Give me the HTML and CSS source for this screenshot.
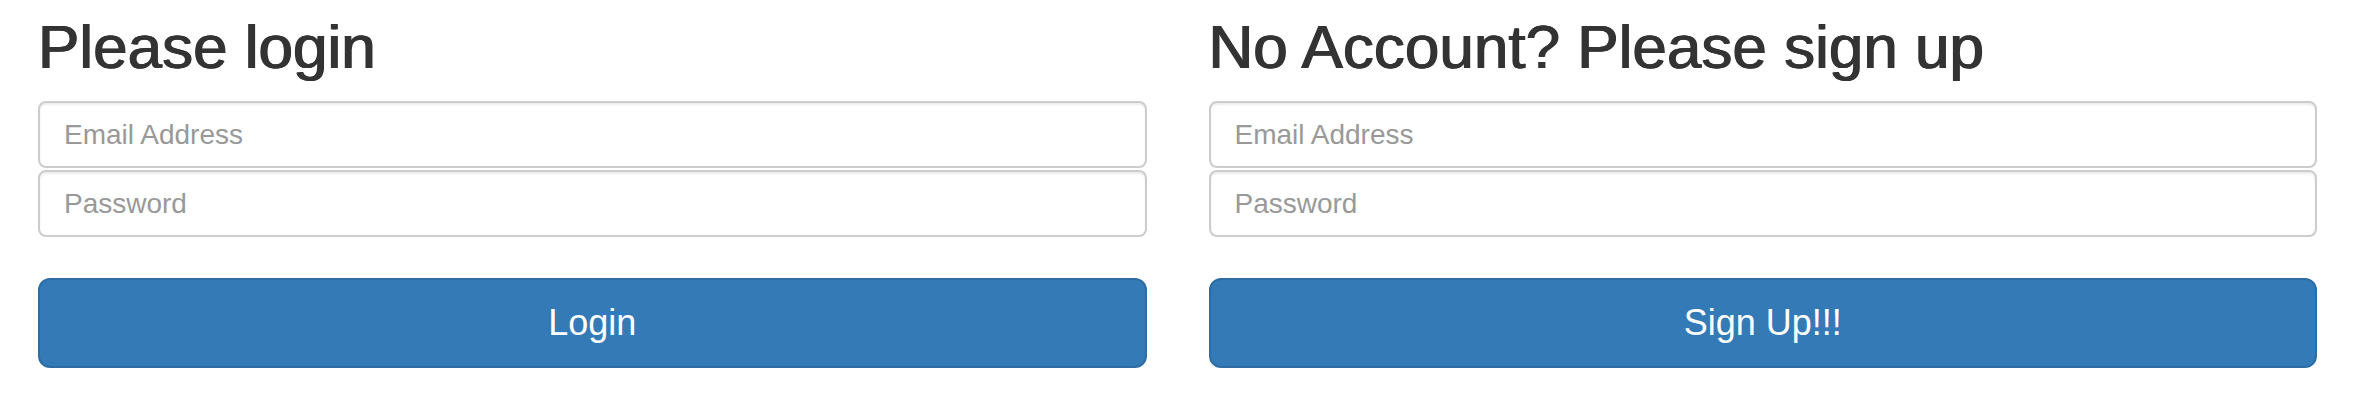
FILE: index.html
```html
<!DOCTYPE html>
<html>
<head>
<meta charset="utf-8">
<link rel="stylesheet" href="styles.css">
</head>
<body>
<div class="page">
  <section class="col">
    <h2 class="title">Please login</h2>
    <form class="form">
      <div class="fields">
        <input class="field" type="email" placeholder="Email Address">
        <input class="field" type="password" placeholder="Password">
      </div>
      <button class="btn" type="button">Login</button>
    </form>
  </section>
  <section class="col">
    <h2 class="title">No Account? Please sign up</h2>
    <form class="form">
      <div class="fields">
        <input class="field" type="email" placeholder="Email Address">
        <input class="field" type="password" placeholder="Password">
      </div>
      <button class="btn" type="button">Sign Up!!!</button>
    </form>
  </section>
</div>
</body>
</html>
```
FILE: styles.css
```css
html, body {
  margin: 0;
  padding: 0;
  background: #fff;
}
body {
  font-family: "Liberation Sans", Arial, sans-serif;
  color: #333;
}
.page {
  display: grid;
  grid-template-columns: 1fr 1fr;
  column-gap: 62px;
  padding: 13px 43px 0 38px;
}
.col {
  display: flex;
  flex-direction: column;
}
.title {
  margin: 0 0 20px 0;
  font-size: 62px;
  line-height: 68px;
  font-weight: normal;
  color: #333;
  text-shadow: 0.7px 0 0 #333, -0.7px 0 0 #333;
}
.form {
  display: flex;
  flex-direction: column;
  gap: 41px;
  margin: 0;
}
.fields {
  display: flex;
  flex-direction: column;
  gap: 2px;
}
.field {
  box-sizing: border-box;
  height: 67px;
  width: 100%;
  margin: 0;
  padding: 0 24px;
  border: 2px solid #ccc;
  border-radius: 8px;
  box-shadow: inset 0 2px 2px rgba(0,0,0,0.075);
  font-family: "Liberation Sans", Arial, sans-serif;
  font-size: 28px;
  color: #555;
  background: #fff;
  outline: none;
}
.field::placeholder {
  color: #999;
}
.btn {
  box-sizing: border-box;
  height: 90px;
  width: 100%;
  margin: 0;
  border: 2px solid #2e6da4;
  border-radius: 12px;
  background: #337ab7;
  color: #fff;
  font-family: "Liberation Sans", Arial, sans-serif;
  font-size: 36px;
  cursor: pointer;
}
```
